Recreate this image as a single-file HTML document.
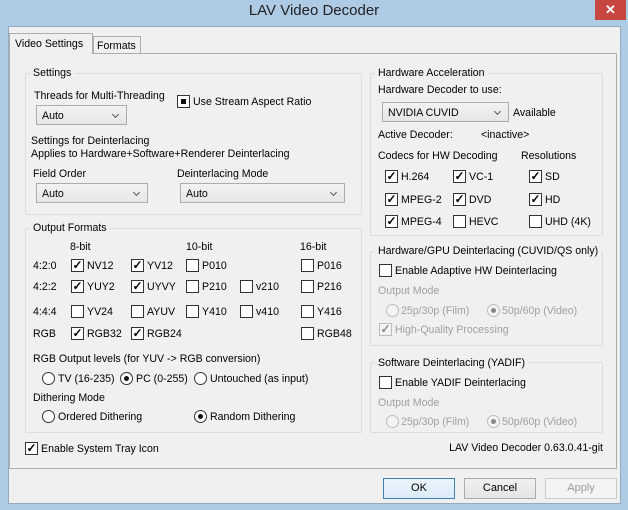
<!DOCTYPE html>
<html><head><meta charset="utf-8"><style>
*{box-sizing:border-box;margin:0;padding:0}
body{width:628px;height:510px;background:#aecbe6;font-family:"Liberation Sans",sans-serif;font-size:10.6px;color:#000;position:relative;overflow:hidden}
.a{position:absolute;white-space:nowrap}
.title{left:0;width:628px;top:2px;text-align:center;font-size:15px;color:#222}
.close{left:595px;top:0;width:31px;height:20px;background:#c7463f;color:#fff;font-size:13px;text-align:center;line-height:20px;font-weight:bold}
.client{left:8px;top:26px;width:613px;height:478px;background:#f0f0f0;border:1px solid #97a9bd}
.pane{left:9px;top:53px;width:608px;height:416px;border:1px solid #adadad;background:#f0f0f0}
.tab{border:1px solid #adadad;border-bottom:none;background:#f0f0f0;padding-left:5px}
.grp{border:1px solid #dcdcdc;border-radius:2px}
.gl{background:#f0f0f0;padding:0 3px}
.cb{width:13px;height:13px;border:1px solid #333;background:#fff;font-size:12px;line-height:11px;text-align:center;font-weight:bold}
.rd{width:13px;height:13px;border:1px solid #333;border-radius:50%;background:#fff}
.rd.on::after{content:"";position:absolute;left:3px;top:3px;width:5px;height:5px;border-radius:50%;background:#111}
.dis{color:#a0a0a0}
.rd.d{border-color:#bcbcbc;background:#f4f4f4}
.rd.d.on::after{background:#888}
.combo{height:20px;border:1px solid #acacac;background:linear-gradient(#f2f2f2,#e6e6e6);padding:4px 0 0 5px}
.combo::after{content:"";position:absolute;right:8px;top:6px;width:4px;height:4px;border-right:1.5px solid #555;border-bottom:1.5px solid #555;transform:rotate(45deg)}
.btn{height:21px;border:1px solid #acacac;background:linear-gradient(#f0f0f0,#e5e5e5);text-align:center;line-height:19px;font-size:11px}
.l{margin-top:1px}
</style></head><body>
<div class="a title">LAV Video Decoder</div>
<div class="a close">✕</div>
<div class="a client"></div>
<div class="a pane"></div>
<div class="a tab" style="left:9px;top:33px;width:84px;height:21px;padding-top:4px">Video Settings</div>
<div class="a tab" style="left:93px;top:36px;width:48px;height:17px;padding-top:3px;padding-left:3px">Formats</div>

<!-- Settings -->
<div class="a grp" style="left:25px;top:73px;width:337px;height:142px"></div>
<div class="a gl" style="left:30px;top:67px">Settings</div>
<div class="a" style="left:34px;top:90px">Threads for Multi-Threading</div>
<div class="a combo" style="left:36px;top:105px;width:91px">Auto</div>
<div class="a cb" style="left:177px;top:95px;font-size:0"><div style="position:absolute;left:3px;top:3px;width:5px;height:5px;background:#111"></div></div>
<div class="a" style="left:193px;top:96px">Use Stream Aspect Ratio</div>
<div class="a" style="left:31px;top:135px">Settings for Deinterlacing</div>
<div class="a" style="left:31px;top:148px">Applies to Hardware+Software+Renderer Deinterlacing</div>
<div class="a" style="left:33px;top:168px">Field Order</div>
<div class="a" style="left:177px;top:168px">Deinterlacing Mode</div>
<div class="a combo" style="left:36px;top:183px;width:112px">Auto</div>
<div class="a combo" style="left:180px;top:183px;width:165px">Auto</div>

<!-- Output Formats -->
<div class="a grp" style="left:25px;top:228px;width:337px;height:205px"></div>
<div class="a gl" style="left:30px;top:222px">Output Formats</div>
<div class="a" style="left:70px;top:241px">8-bit</div>
<div class="a" style="left:186px;top:241px">10-bit</div>
<div class="a" style="left:300px;top:241px">16-bit</div>
<div class="a" style="left:33px;top:260px">4:2:0</div>
<div class="a" style="left:33px;top:281px">4:2:2</div>
<div class="a" style="left:33px;top:306px">4:4:4</div>
<div class="a" style="left:33px;top:328px">RGB</div>

<div class="a cb" style="left:71px;top:259px">✓</div><div class="a l" style="left:87px;top:259px">NV12</div>
<div class="a cb" style="left:131px;top:259px">✓</div><div class="a l" style="left:147px;top:259px">YV12</div>
<div class="a cb" style="left:186px;top:259px"></div><div class="a l" style="left:202px;top:259px">P010</div>
<div class="a cb" style="left:301px;top:259px"></div><div class="a l" style="left:317px;top:259px">P016</div>

<div class="a cb" style="left:71px;top:280px">✓</div><div class="a l" style="left:87px;top:280px">YUY2</div>
<div class="a cb" style="left:131px;top:280px">✓</div><div class="a l" style="left:147px;top:280px">UYVY</div>
<div class="a cb" style="left:186px;top:280px"></div><div class="a l" style="left:202px;top:280px">P210</div>
<div class="a cb" style="left:240px;top:280px"></div><div class="a l" style="left:256px;top:280px">v210</div>
<div class="a cb" style="left:301px;top:280px"></div><div class="a l" style="left:317px;top:280px">P216</div>

<div class="a cb" style="left:71px;top:305px"></div><div class="a l" style="left:87px;top:305px">YV24</div>
<div class="a cb" style="left:131px;top:305px"></div><div class="a l" style="left:147px;top:305px">AYUV</div>
<div class="a cb" style="left:186px;top:305px"></div><div class="a l" style="left:202px;top:305px">Y410</div>
<div class="a cb" style="left:240px;top:305px"></div><div class="a l" style="left:256px;top:305px">v410</div>
<div class="a cb" style="left:301px;top:305px"></div><div class="a l" style="left:317px;top:305px">Y416</div>

<div class="a cb" style="left:71px;top:327px">✓</div><div class="a l" style="left:87px;top:327px">RGB32</div>
<div class="a cb" style="left:131px;top:327px">✓</div><div class="a l" style="left:147px;top:327px">RGB24</div>
<div class="a cb" style="left:301px;top:327px"></div><div class="a l" style="left:317px;top:327px">RGB48</div>

<div class="a" style="left:33px;top:353px">RGB Output levels (for YUV -&gt; RGB conversion)</div>
<div class="a rd" style="left:42px;top:372px"></div><div class="a l" style="left:58px;top:372px">TV (16-235)</div>
<div class="a rd on" style="left:120px;top:372px"></div><div class="a l" style="left:136px;top:372px">PC (0-255)</div>
<div class="a rd" style="left:194px;top:372px"></div><div class="a l" style="left:210px;top:372px">Untouched (as input)</div>
<div class="a" style="left:33px;top:392px">Dithering Mode</div>
<div class="a rd" style="left:42px;top:410px"></div><div class="a l" style="left:58px;top:410px">Ordered Dithering</div>
<div class="a rd on" style="left:194px;top:410px"></div><div class="a l" style="left:210px;top:410px">Random Dithering</div>

<div class="a cb" style="left:25px;top:442px">✓</div><div class="a l" style="left:41px;top:442px">Enable System Tray Icon</div>

<!-- Hardware Acceleration -->
<div class="a grp" style="left:370px;top:73px;width:233px;height:163px"></div>
<div class="a gl" style="left:375px;top:67px">Hardware Acceleration</div>
<div class="a" style="left:378px;top:84px">Hardware Decoder to use:</div>
<div class="a combo" style="left:382px;top:102px;width:127px">NVIDIA CUVID</div>
<div class="a" style="left:513px;top:107px">Available</div>
<div class="a" style="left:378px;top:129px">Active Decoder:</div>
<div class="a" style="left:481px;top:129px">&lt;inactive&gt;</div>
<div class="a" style="left:378px;top:150px">Codecs for HW Decoding</div>
<div class="a" style="left:521px;top:150px">Resolutions</div>
<div class="a cb" style="left:385px;top:170px">✓</div><div class="a l" style="left:401px;top:170px">H.264</div>
<div class="a cb" style="left:453px;top:170px">✓</div><div class="a l" style="left:469px;top:170px">VC-1</div>
<div class="a cb" style="left:529px;top:170px">✓</div><div class="a l" style="left:545px;top:170px">SD</div>
<div class="a cb" style="left:385px;top:193px">✓</div><div class="a l" style="left:401px;top:193px">MPEG-2</div>
<div class="a cb" style="left:453px;top:193px">✓</div><div class="a l" style="left:469px;top:193px">DVD</div>
<div class="a cb" style="left:529px;top:193px">✓</div><div class="a l" style="left:545px;top:193px">HD</div>
<div class="a cb" style="left:385px;top:215px">✓</div><div class="a l" style="left:401px;top:215px">MPEG-4</div>
<div class="a cb" style="left:453px;top:215px"></div><div class="a l" style="left:469px;top:215px">HEVC</div>
<div class="a cb" style="left:529px;top:215px"></div><div class="a l" style="left:545px;top:215px">UHD (4K)</div>

<!-- HW deint -->
<div class="a grp" style="left:370px;top:251px;width:233px;height:95px"></div>
<div class="a gl" style="left:375px;top:245px">Hardware/GPU Deinterlacing (CUVID/QS only)</div>
<div class="a cb" style="left:379px;top:264px"></div><div class="a l" style="left:395px;top:264px">Enable Adaptive HW Deinterlacing</div>
<div class="a dis" style="left:378px;top:285px">Output Mode</div>
<div class="a rd d" style="left:386px;top:304px"></div><div class="a dis l" style="left:401px;top:304px">25p/30p (Film)</div>
<div class="a rd d on" style="left:487px;top:304px"></div><div class="a dis l" style="left:502px;top:304px">50p/60p (Video)</div>
<div class="a cb" style="left:379px;top:323px;border-color:#bcbcbc;background:#f4f4f4;color:#888">✓</div><div class="a dis l" style="left:395px;top:323px">High-Quality Processing</div>

<!-- SW deint -->
<div class="a grp" style="left:370px;top:362px;width:233px;height:71px"></div>
<div class="a gl" style="left:375px;top:357px">Software Deinterlacing (YADIF)</div>
<div class="a cb" style="left:379px;top:376px"></div><div class="a l" style="left:395px;top:376px">Enable YADIF Deinterlacing</div>
<div class="a dis" style="left:378px;top:397px">Output Mode</div>
<div class="a rd d" style="left:386px;top:415px"></div><div class="a dis l" style="left:401px;top:415px">25p/30p (Film)</div>
<div class="a rd d on" style="left:487px;top:415px"></div><div class="a dis l" style="left:502px;top:415px">50p/60p (Video)</div>

<div class="a" style="left:0;width:603px;text-align:right;top:442px">LAV Video Decoder 0.63.0.41-git</div>

<div class="a btn" style="left:383px;top:478px;width:72px;border-color:#3c7fb1;background:linear-gradient(#eaf4fb,#dcecf7)">OK</div>
<div class="a btn" style="left:464px;top:478px;width:72px">Cancel</div>
<div class="a btn" style="left:545px;top:478px;width:72px;color:#9a9a9a;border-color:#cbcbcb;background:#f4f4f4">Apply</div>
</body></html>
